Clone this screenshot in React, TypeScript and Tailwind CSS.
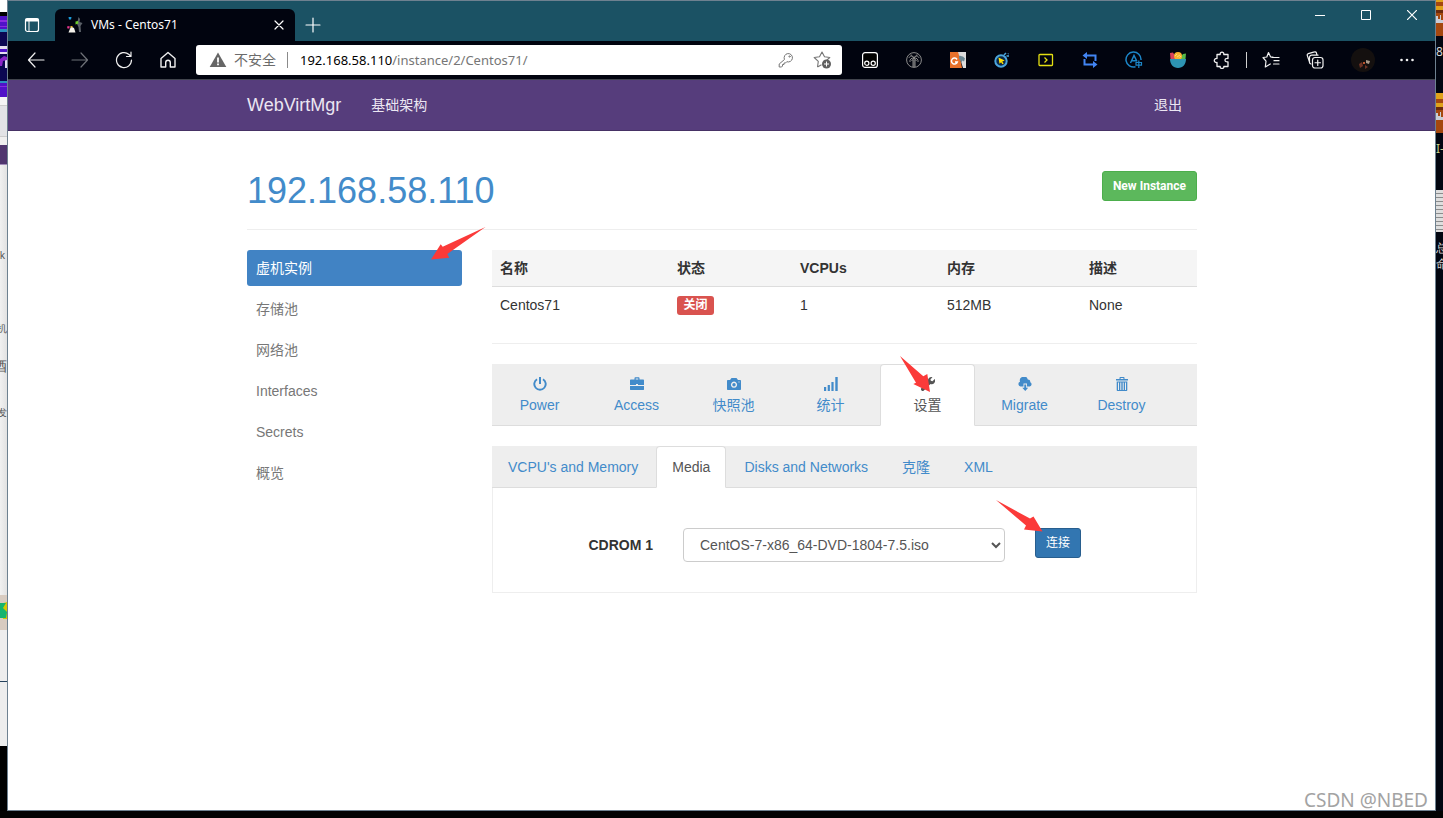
import { useState, type ReactNode } from 'react';
import clsx from 'clsx';

interface IconProps {
  children: ReactNode;
  size?: string;
  box?: string;
}

// Thin outline icon used by the browser toolbar
function LineIcon({ children, size = 'size-5', box = '0 0 20 20' }: IconProps) {
  return (
    <svg viewBox={box} className={size} fill="none" stroke="currentColor" strokeWidth="1.2" strokeLinecap="round" strokeLinejoin="round" aria-hidden="true">
      {children}
    </svg>
  );
}

// Solid 14px glyph used by the instance tabs
function Glyph({ children }: { children: ReactNode }) {
  return (
    <svg viewBox="0 0 14 14" className="size-3.5" fill="currentColor" aria-hidden="true">
      {children}
    </svg>
  );
}

function ToolButton({ label, children, dim }: { label: string; children: ReactNode; dim?: boolean }) {
  return (
    <button type="button" aria-label={label} className={clsx('flex h-8 w-11 shrink-0 items-center justify-center', dim ? 'text-[#6f7278]' : 'text-[#f0f0f0]')}>
      {children}
    </button>
  );
}

function TitleBar() {
  return (
    <div className="flex h-10 bg-[#1b5264] text-white">
      <button type="button" aria-label="Tab actions" className="flex h-10 w-[47px] items-end justify-center pb-2">
        <svg viewBox="0 0 16 16" className="size-4" fill="none" stroke="currentColor" aria-hidden="true">
          <rect x="1.5" y="1.5" width="13" height="13" rx="2" strokeWidth="1.2" />
          <path d="M1.5 3.5h13M1.5 2.6h13" strokeWidth="2" />
          <path d="M5 4v10.5" />
        </svg>
      </button>
      <div className="mt-2 flex w-60 items-center rounded-t-md bg-[#01040f] pr-2 pl-3">
        <svg viewBox="0 0 16 16" className="size-4 shrink-0" aria-hidden="true">
          <path d="M1.500 0h3l-.5 2.500h-2z" fill="#1c9ad8" />
          <path d="M11.500 0l1.500 2-.5 3 3 1-2 3 .5 6h-2l-.5-5-1.500-3z" fill="#5b6068" />
          <path d="M8.500 4.500l2.500-.5.5 2.500-3 1z" fill="#6fce2c" />
          <path d="M0 9.500l2.500-.5v2.500H.5z" fill="#e8358e" />
          <path d="M4 9.500l3 1.500 1.500 4.500H1.500l1-2.500z" fill="#f4f1ea" />
          <path d="M3.500 9h2v1.500h-2z" fill="#e6b422" />
        </svg>
        <span className="ml-2 flex-1 text-xs leading-4">VMs - Centos71</span>
        <button type="button" aria-label="Close tab" className="flex size-4 items-center justify-center">
          <LineIcon size="size-3" box="0 0 12 12">
            <path d="M2 2l8 8M10 2l-8 8" />
          </LineIcon>
        </button>
      </div>
      <button type="button" aria-label="New tab" className="mt-2 flex h-8 w-9 items-center justify-center">
        <LineIcon size="size-4" box="0 0 16 16">
          <path d="M8 1v14M1 8h14" />
        </LineIcon>
      </button>
      <div className="ml-auto flex h-7">
        <button type="button" aria-label="Minimize" className="flex w-[46px] items-center justify-center">
          <svg viewBox="0 0 10 10" className="size-2.5" aria-hidden="true"><path d="M0 5.500h10" stroke="#fff" /></svg>
        </button>
        <button type="button" aria-label="Maximize" className="flex w-[46px] items-center justify-center">
          <svg viewBox="0 0 10 10" className="size-2.5" aria-hidden="true"><path d="M.5.5h9v9h-9z" fill="none" stroke="#fff" /></svg>
        </button>
        <button type="button" aria-label="Close" className="flex w-[46px] items-center justify-center">
          <svg viewBox="0 0 10 10" className="size-2.5" aria-hidden="true"><path d="M0 0l10 10M10 0L0 10" stroke="#fff" strokeWidth="1.2" /></svg>
        </button>
      </div>
    </div>
  );
}

function AddressBar() {
  return (
    <div className="mx-1.5 flex h-[30px] min-w-0 flex-1 items-center rounded-[3px] bg-white text-sm text-[#6b6b6b]">
      <svg viewBox="0 0 18 16" className="ml-[13px] h-4 w-[18px] shrink-0" aria-hidden="true">
        <path d="M9 0.500L17.300 15H0.700z" fill="#666" />
        <path d="M8.100 5.500h1.800v5H8.100zM8.100 11.500h1.800v1.800H8.100z" fill="#fff" />
      </svg>
      <span className="ml-[7px] leading-5">不安全</span>
      <span className="mx-[11px] h-4 w-px bg-[#8a8a8a]" />
      <a href="#url" className="flex-1 truncate pl-px text-[13px] leading-5 text-[#767676]">
        <span className="text-black">192.168.58.110</span>/instance/2/Centos71/
      </a>
      <button type="button" aria-label="Passwords" className="flex size-9 items-center justify-center text-[#767676]">
        <LineIcon size="size-4" box="0 0 16 16">
          <path strokeWidth="1" d="M6.300 7.200A4.200 4.200 0 1 1 8.800 9.700L7.500 11H6v1.500H4.500V14L3.600 15H1.200v-2.600z" />
          <circle cx="11.500" cy="4.500" r=".7" strokeWidth=".8" />
        </LineIcon>
      </button>
      <button type="button" aria-label="Add to favorites" className="mr-0.5 flex size-9 items-center justify-center text-[#767676]">
        <svg viewBox="0 0 18 18" className="size-[18px]" aria-hidden="true">
          <path d="M4.500 16l.8-5.600L1.200 6.500l5.300-.8L9 1l2.500 4.700 5.300.8-3 2.700M4.500 16l4-2.200" fill="none" stroke="currentColor" strokeWidth="1.100" strokeLinejoin="round" />
          <circle cx="13.500" cy="13" r="4.500" fill="#5f5f5f" />
          <path d="M13.500 10.500v5M11 13h5" stroke="#fff" />
        </svg>
      </button>
    </div>
  );
}

function Extensions() {
  return (
    <>
      <ToolButton label="Tampermonkey">
        <svg viewBox="0 0 16 16" className="size-4" aria-hidden="true">
          <rect x=".6" y=".6" width="14.800" height="14.800" rx="2.500" fill="#000" stroke="#fff" strokeWidth="1.200" />
          <circle cx="4.800" cy="11.200" r="2.100" fill="none" stroke="#fff" strokeWidth="1.200" />
          <circle cx="11.200" cy="11.200" r="2.100" fill="none" stroke="#fff" strokeWidth="1.200" />
        </svg>
      </ToolButton>
      <ToolButton label="Palm">
        <svg viewBox="0 0 16 16" className="size-4" fill="none" stroke="#8b8b8b" aria-hidden="true">
          <circle cx="8" cy="8" r="7.400" />
          <path d="M8 6v9M7 15V8M9 15V8M8 6C6 3 3.500 4 3 6M8 6c2-3 4.500-2 5 0M8 6C5 5.500 3.500 8 4 10M8 6c3-.5 4.500 2 4 4M8 6C7 4 5 2.500 4.500 3M8 6c1-2 3-3.500 3.500-3M8 6L5.500 9M8 6l2.500 3" />
        </svg>
      </ToolButton>
      <ToolButton label="Translate">
        <svg viewBox="0 0 16 16" className="size-4" aria-hidden="true">
          <path d="M0 0h9l3 16H0z" fill="#e8712a" />
          <path d="M8 0h8v16h-3z" fill="#dcdcdc" />
          <path d="M7 7.500A3 3 0 1 0 7.300 10H5" fill="none" stroke="#fff" strokeWidth="1.500" />
          <path d="M9 4c1.500-1 3 .5 4 .5l2 2-1 3-1.500-1-1.500 2.500-.5-3L9 7z" fill="#6b8793" />
        </svg>
      </ToolButton>
      <ToolButton label="Speed cursor">
        <svg viewBox="0 0 16 16" className="size-4" aria-hidden="true">
          <circle cx="7" cy="9" r="5.700" fill="#0c2746" stroke="#4aa5dc" strokeWidth="2" />
          <path d="M4.500 5.500l6.200 3-2.500.9 1.500 2-1.300.8-1.300-2-1.600 1.600z" fill="#ffe100" />
          <path d="M10 3l2-2M12.500 4h2.500M14.500 1.500l-.5.5" stroke="#4aa5dc" strokeWidth="1.500" />
        </svg>
      </ToolButton>
      <ToolButton label="Console">
        <svg viewBox="0 0 16 16" className="size-4" fill="none" stroke="#e4df12" strokeWidth="1.300" aria-hidden="true">
          <rect x="1" y="2.500" width="13.500" height="11" rx=".8" />
          <path d="M6.500 5.500L9 8l-2.500 2.500" />
        </svg>
      </ToolButton>
      <ToolButton label="Sync">
        <svg viewBox="0 0 16 16" className="size-4" aria-hidden="true">
          <path d="M4 3.500h9.500V9M12 12.500H2.500V7" fill="none" stroke="#4285f4" strokeWidth="2" />
          <path d="M5 0v7L0.500 3.500zM11 9v7l4.500-3.500z" fill="#4285f4" />
        </svg>
      </ToolButton>
      <ToolButton label="Language">
        <svg viewBox="0 0 18 18" className="size-[18px]" fill="none" stroke="#1c86c8" strokeWidth="1.500" aria-hidden="true">
          <path d="M10.500 15.800A7.500 7.500 0 1 1 16 9" />
          <path d="M5.500 12L9 4.500l3 6M6.700 9.700h4.500" />
          <path d="M11 11.500h5.500v2.700H11zM13.800 9.500V17" strokeWidth="1.200" />
        </svg>
      </ToolButton>
      <ToolButton label="Fruit bowl">
        <svg viewBox="0 0 16 16" className="size-4" aria-hidden="true">
          <path d="M0 1l3-.5L7 7H.5z" fill="#d8425b" />
          <path d="M16 1.500L13 2 9 7h6.500z" fill="#57b947" />
          <circle cx="8" cy="4" r="4" fill="#f8b22d" />
          <path d="M5 4l2-2M7 5l3-2M9.500 5.500l1.500-1.500" stroke="#fbdc72" />
          <path d="M0 7h16c0 5-3 9-8 9S0 12 0 7z" fill="#2d94b3" />
        </svg>
      </ToolButton>
      <ToolButton label="Extensions">
        <LineIcon size="size-[18px]" box="0 0 18 18">
          <path strokeWidth="1.300" d="M4 3.500h3.200C7 1.900 7.900 1.200 9 1.200s2 .7 1.800 2.300H15v4c-2-.3-3 .6-3 1.700s1 2 3 1.700v4.600h-4.200c.2 1.500-.7 2-1.800 2s-2-.5-1.800-2H4v-4c-1.700.2-2.700-.8-2.700-2S2.300 7.300 4 7.500z" />
        </LineIcon>
      </ToolButton>
    </>
  );
}

function Toolbar() {
  return (
    <div className="flex h-[39px] items-center border-b border-[#41454d] bg-[#01040f] px-1.5">
      <ToolButton label="Back">
        <LineIcon size="size-[18px]" box="0 0 18 18"><path d="M17 9H1.500M8 2L1.500 9 8 16" /></LineIcon>
      </ToolButton>
      <ToolButton label="Forward" dim>
        <LineIcon size="size-[18px]" box="0 0 18 18"><path d="M1 9h15.500M10 2l6.500 7-6.500 7" /></LineIcon>
      </ToolButton>
      <ToolButton label="Refresh">
        <LineIcon size="size-[18px]" box="0 0 18 18"><path d="M16.500 9A7.500 7.500 0 1 1 14 3.500l1.500 1.500M16 1v4.500h-4.500" /></LineIcon>
      </ToolButton>
      <ToolButton label="Home">
        <LineIcon size="size-[18px]" box="0 0 18 18"><path strokeWidth="1.400" d="M2 7.500L9 1.500l7 6V16h-4.700v-4.500a2.300 2.300 0 0 0-4.600 0V16H2z" /></LineIcon>
      </ToolButton>
      <AddressBar />
      <Extensions />
      <span className="mx-0.5 h-4 w-px bg-[#d0d0d0]" />
      <ToolButton label="Favorites">
        <LineIcon size="size-[18px]" box="0 0 18 18"><path d="M10 6.500h7M12 9.700h5M11.500 13H17M11 6L8.500 5.800 6.500 1.500 4.800 6 1 6.500l3 3.700L3.300 16l5-3" /></LineIcon>
      </ToolButton>
      <ToolButton label="Collections">
        <LineIcon size="size-[18px]" box="0 0 18 18"><path d="M3.500 11L1.300 4.500a1.500 1.500 0 0 1 1-1.900L8.500.9a1.500 1.500 0 0 1 1.900.9l.4 1.700M5 13a2 2 0 0 1-1.500-1.500V6A2.500 2.500 0 0 1 6 4.200h6" /><rect x="6.500" y="6.500" width="10.500" height="10.500" rx="2.500" /><path d="M11.750 9v5.500M9 11.750h5.500" /></LineIcon>
      </ToolButton>
      <div className="ml-1 flex">
        <ToolButton label="Profile">
          <svg viewBox="0 0 24 24" className="size-6" aria-hidden="true">
            <circle cx="12" cy="12" r="12" fill="#14100f" />
            <path d="M8 16l3-2 1 4-3 2zM14 17l3 2-3 2z" fill="#6e3325" />
            <path d="M15 12l4 1-1 3-3-1z" fill="#a99a8a" />
            <path d="M12 14h2v2h-2z" fill="#b8542f" />
          </svg>
        </ToolButton>
        <ToolButton label="Settings and more">
          <svg viewBox="0 0 14 4" className="h-1 w-3.5" fill="#f0f0f0" aria-hidden="true">
            <circle cx="1.500" cy="2" r="1.300" /><circle cx="7" cy="2" r="1.300" /><circle cx="12.500" cy="2" r="1.300" />
          </svg>
        </ToolButton>
      </div>
    </div>
  );
}

function Arrow({ points, className, box }: { points: string; className: string; box: string }) {
  return (
    <svg viewBox={box} className={clsx('pointer-events-none absolute z-10', className)} aria-hidden="true">
      <polygon points={points} fill="#fb3a39" />
    </svg>
  );
}

const sideItems = ['虚机实例', '存储池', '网络池', 'Interfaces', 'Secrets', '概览'];

const mainTabs = [
  { name: 'Power', icon: <Glyph><path d="M6 0h2v7H6z" /><path d="M4 2.200A5.700 5.700 0 1 0 10 2.200" fill="none" stroke="currentColor" strokeWidth="1.900" /></Glyph> },
  { name: 'Access', icon: <Glyph><path d="M4.500 2.500V1.300C4.500.6 5 .3 5.500.3h3c.5 0 1 .3 1 1v1.200H13c.6 0 1 .4 1 1V8H8V7H6v1H0V3.500c0-.6.400-1 1-1zM5.700 2.500h2.600v-1H5.700zM0 9h14v3.500c0 .3-.2.500-.5.500H.5c-.3 0-.5-.2-.5-.5z" /></Glyph> },
  { name: '快照池', icon: <Glyph><path fillRule="evenodd" d="M4.500 1h5l1.500 2h2c.6 0 1 .4 1 1v8c0 .6-.4 1-1 1H1c-.6 0-1-.4-1-1V4c0-.6.400-1 1-1h2zM7 4.600a3.100 3.100 0 1 0 .01 0zM11.500 4.500v1h1v-1z" /><circle cx="7" cy="7.700" r="1.700" /></Glyph> },
  { name: '统计', icon: <Glyph><path d="M0 10h2.200v4H0zM3.700 8h2.200v6H3.700zM7.400 5h2.200v9H7.400zM11.300 0h2.400v14h-2.400z" /></Glyph> },
  { name: '设置', icon: <Glyph><path d="M13.700 2L11.500 4.200 9.800 3.800 9.500 2.300 11.500.3A3.500 3.500 0 0 0 7 4.500L.5 11a1.600 1.600 0 0 0 2.400 2.400L9.500 7a3.500 3.500 0 0 0 4.200-5z" /></Glyph> },
  { name: 'Migrate', icon: <Glyph><path d="M5.500 9.500H2.500A2.500 2.500 0 0 1 2 4.700 4 4 0 0 1 9.800 2.500a2.500 2.500 0 0 1 2.500 2.700A2.300 2.300 0 0 1 11.800 9.500H9V6.500H5.500z" /><path d="M6.300 7.500h1.900v3.300h2L7.250 14l-3-3.200h2z" /></Glyph> },
  { name: 'Destroy', icon: <Glyph><path fillRule="evenodd" d="M4.500 2V.8c0-.5.300-.8.800-.8h3.400c.5 0 .8.300.8.800V2H13v1.500H1V2zM5.600 2h2.800V1H5.600zM1.700 4.500h10.600V13c0 .6-.4 1-1 1H2.700c-.6 0-1-.4-1-1zM3 5.500V13h1V5.500zM5.300 5.500V13h1V5.500zM7.700 5.500V13h1V5.500zM10 5.500V13h1V5.500z" /></Glyph> },
];

const subTabs = ["VCPU's and Memory", 'Media', 'Disks and Networks', '克隆', 'XML'];

// Sliver of the desktop visible left of the window
function LeftDesktop() {
  return (
    <div className="w-[7px] shrink-0 overflow-hidden bg-black text-xs text-[#555]">
      <div className="h-3 bg-white" />
      <div className="h-1 bg-black" />
      <svg viewBox="0 0 7 81" className="h-[81px] w-[7px]" aria-hidden="true">
        <path d="M0 0h7v81H0z" fill="#5012c8" />
        <path d="M0 4h7v2H0zM0 10h7v1H0zM0 70h7v1H0z" fill="#8a2be0" />
        <path d="M0 13h7v3H0zM0 65h7v2H0z" fill="#2d8fc0" />
        <path d="M0 16h7v14H0zM0 38h7v27H0z" fill="#0b0752" />
        <path d="M0 30h7v3H0zM0 36h7v2H0zM5 44h2v8H5z" fill="#e4def0" />
        <path d="M0 43l4-3 3 1v3l-4 1-1 5H0z" fill="#8a24c8" />
      </svg>
      <div className="h-2 bg-[#f5f5f5]" />
      <div className="h-8 border-y border-[#ccc] bg-[#e2e3e6]" />
      <div className="h-2 bg-[#efefef]" />
      <div className="h-5 border-b border-[#a08bb8] bg-[#50366f]" />
      <div className="flex h-[430px] flex-col items-end bg-linear-to-r from-[#f1f1f1] to-[#e2e2e2] pt-[82px] leading-4">
        <span className="h-[73px] pr-0.5 text-[10px]">k</span>
        <span className="h-9 text-[10px]">机</span>
        <span className="h-12 text-sm">酒</span>
        <span className="text-[10px]">发</span>
      </div>
      <svg viewBox="0 0 7 35" className="h-[35px] w-[7px]" aria-hidden="true">
        <path d="M0 0h7v35H0z" fill="#d8cbc0" />
        <path d="M0 9l7-2v17H3z" fill="#d8c800" />
        <path d="M0 8h6L3 13l4 4-1 6H0z" fill="#16b46e" />
      </svg>
      <div className="h-13 border-b border-[#24415c] bg-[#ededed]" />
      <div className="h-16 bg-[#ededed]" />
    </div>
  );
}

function Roof() {
  return (
    <svg viewBox="0 0 7 40" className="h-10 w-[7px] shrink-0" aria-hidden="true">
      <path d="M0 0h7v40H0z" fill="#a5480f" />
      <path d="M0 0h7v6H0zM0 10h7v4H0z" fill="#e0a21b" />
      <path d="M0 14h7v3H0z" fill="#6b2a0c" />
      <path d="M0 26V20h2v3h2v-4h1v5h2v3H0z" fill="#c9cdd6" />
    </svg>
  );
}

// Sliver of the desktop visible right of the window
function RightDesktop() {
  return (
    <div className="flex w-[7px] shrink-0 flex-col overflow-hidden bg-[#020611] text-xs leading-4 text-[#d8d8d8]">
      <div className="-mt-1 h-10"><Roof /></div>
      <span className="mt-2 h-[49px]">8</span>
      <Roof />
      <span className="mt-2 h-[49px] text-[#c8d08a]">I-</span>
      <svg viewBox="0 0 7 42" className="h-[42px] w-[7px] shrink-0" aria-hidden="true">
        <path d="M0 0h7v42H0z" fill="#dedede" />
        <path d="M0 3.500h7M0 7.500h7M0 11.500h7M0 15.500h7M0 19.500h7M0 23.500h7M0 27.500h7M0 31.500h7M0 35.500h7M0 39.500h7" stroke="#8c8c8c" />
      </svg>
      <span className="mt-2">总</span>
      <span>命</span>
    </div>
  );
}

function InstanceTable() {
  return (
    <table className="w-full table-fixed text-left">
      <thead className="border-b border-[#ddd] bg-[#f5f5f5]">
        <tr>
          <th className="w-[177px] p-2">名称</th>
          <th className="w-[123px] p-2">状态</th>
          <th className="w-[147px] p-2">VCPUs</th>
          <th className="w-[142px] p-2">内存</th>
          <th className="p-2">描述</th>
        </tr>
      </thead>
      <tbody>
        <tr>
          <td className="p-2">Centos71</td>
          <td className="px-2 pt-[9px] pb-2">
            <span className="block h-[19px] w-[37px] rounded-[3px] bg-[#d9534f] text-center text-xs leading-[19px] font-bold text-white">关闭</span>
          </td>
          <td className="p-2">1</td>
          <td className="p-2">512MB</td>
          <td className="p-2">None</td>
        </tr>
      </tbody>
    </table>
  );
}

export default function App() {
  const [side, setSide] = useState('虚机实例');
  const [tab, setTab] = useState('设置');
  const [sub, setSub] = useState('Media');

  return (
    <div className="relative flex min-h-screen flex-col bg-black">
      <div className="flex flex-1">
        <LeftDesktop />
        <div className="flex min-w-0 flex-1 flex-col border border-[#6e8190] bg-white">
          <div className="font-['Noto_Sans','Noto_Sans_CJK_SC',sans-serif]">
            <TitleBar />
            <Toolbar />
          </div>

          <div className="font-['Liberation_Sans','Noto_Sans_CJK_SC',sans-serif] text-sm leading-5 text-[#333]">
            <nav className="border-b border-[#463265] bg-[#563d7c] text-[#ebe6f2]">
              <div className="mx-auto flex h-[50px] max-w-[951px] items-center pl-px">
                <a href="#home" className="text-lg leading-5">WebVirtMgr</a>
                <a href="#infra" className="ml-[30px]">基础架构</a>
                <a href="#logout" className="mr-[15px] ml-auto">退出</a>
              </div>
            </nav>

            <div className="mx-auto max-w-[951px] pt-10 pl-px">
              <header className="flex items-start justify-between border-b border-[#eee] pb-[18px]">
                <h1 className="text-4xl leading-10 text-[#428bca]"><a href="#host">192.168.58.110</a></h1>
                <button type="button" className="h-[30px] rounded-[3px] border border-[#4cae4c] bg-[#5cb85c] px-2.5 font-['Roboto',sans-serif] text-xs font-bold text-white">
                  New Instance
                </button>
              </header>

              <div className="mt-5 flex gap-[30px]">
                <ul className="relative flex w-[215px] shrink-0 flex-col gap-[5px]">
                  {sideItems.map((item) => (
                    <li key={item}>
                      <a
                        href={`#${item}`}
                        onClick={() => setSide(item)}
                        className={clsx('block rounded-[3px] px-[9px] py-2', side === item ? 'bg-[#4183c4] text-white' : 'text-[#777]')}
                      >
                        {item}
                      </a>
                    </li>
                  ))}
                  <Arrow className="-top-6 -right-6 h-9 w-14" box="430 226 56 36" points="431,259.500 440.700,244.300 442.700,246.700 485.500,227 447.300,254 449.300,257.700" />
                </ul>

                <div className="min-w-0 flex-1">
                  <InstanceTable />
                  <hr className="my-5 border-[#eee]" />

                  <ul className="flex border-b border-[#ddd] bg-[#eee]">
                    {mainTabs.map(({ name, icon }) => (
                      <li key={name} className="relative mr-0.5 -mb-px">
                        <a
                          href={`#${name}`}
                          onClick={() => setTab(name)}
                          className={clsx(
                            'flex w-[95px] flex-col items-center rounded-t border py-2.5',
                            tab === name ? 'border-[#ddd] border-b-white bg-white text-[#555]' : 'border-transparent text-[#428bca]'
                          )}
                        >
                          <span className="flex h-5 items-start pt-0.5">{icon}</span>
                          <span>{name}</span>
                        </a>
                        {name === '设置' && (
                          <Arrow className="-top-2 left-5 h-9 w-[30px]" box="900 356 30 36" points="900,356 923.300,376.300 927.300,374 930,392 913.300,384 916,382.700" />
                        )}
                      </li>
                    ))}
                  </ul>

                  <ul className="mt-5 flex border-b border-[#ddd] bg-[#eee]">
                    {subTabs.map((name) => (
                      <li key={name} className="mr-0.5 -mb-px">
                        <a
                          href={`#${name}`}
                          onClick={() => setSub(name)}
                          className={clsx(
                            'block rounded-t border px-[15px] py-2.5',
                            sub === name ? 'border-[#ddd] border-b-white bg-white text-[#555]' : 'border-transparent text-[#428bca]'
                          )}
                        >
                          {name}
                        </a>
                      </li>
                    ))}
                  </ul>

                  <form className="flex items-start border border-t-0 border-[#eee] pt-10 pb-[30px]" onSubmit={(e) => e.preventDefault()}>
                    <label htmlFor="cdrom" className="w-40 py-[7px] text-right font-bold">CDROM 1</label>
                    <select id="cdrom" className="ml-[30px] h-[34px] w-[322px] rounded border border-[#ccc] bg-white px-3 text-[#555]">
                      <option>CentOS-7-x86_64-DVD-1804-7.5.iso</option>
                    </select>
                    <div className="relative ml-[30px]">
                      <button type="submit" className="h-[30px] rounded-[3px] border border-[#285e8e] bg-[#3276b1] px-2.5 text-xs text-white">连接</button>
                      <Arrow className="-top-7 right-[38px] h-[35px] w-[47px]" box="996 500 47 35" points="996,500 1030,518.500 1033.500,516.500 1042.500,531.500 1024,529.500 1026,525.500" />
                    </div>
                  </form>
                </div>
              </div>
            </div>
          </div>
        </div>
        <RightDesktop />
      </div>
      <div className="h-[7px] bg-[#020303]" />
      <p className="absolute right-[15px] bottom-1 font-['Noto_Sans',sans-serif] text-[19px] leading-7 text-[#a3a3a3]">CSDN @NBED</p>
    </div>
  );
}
